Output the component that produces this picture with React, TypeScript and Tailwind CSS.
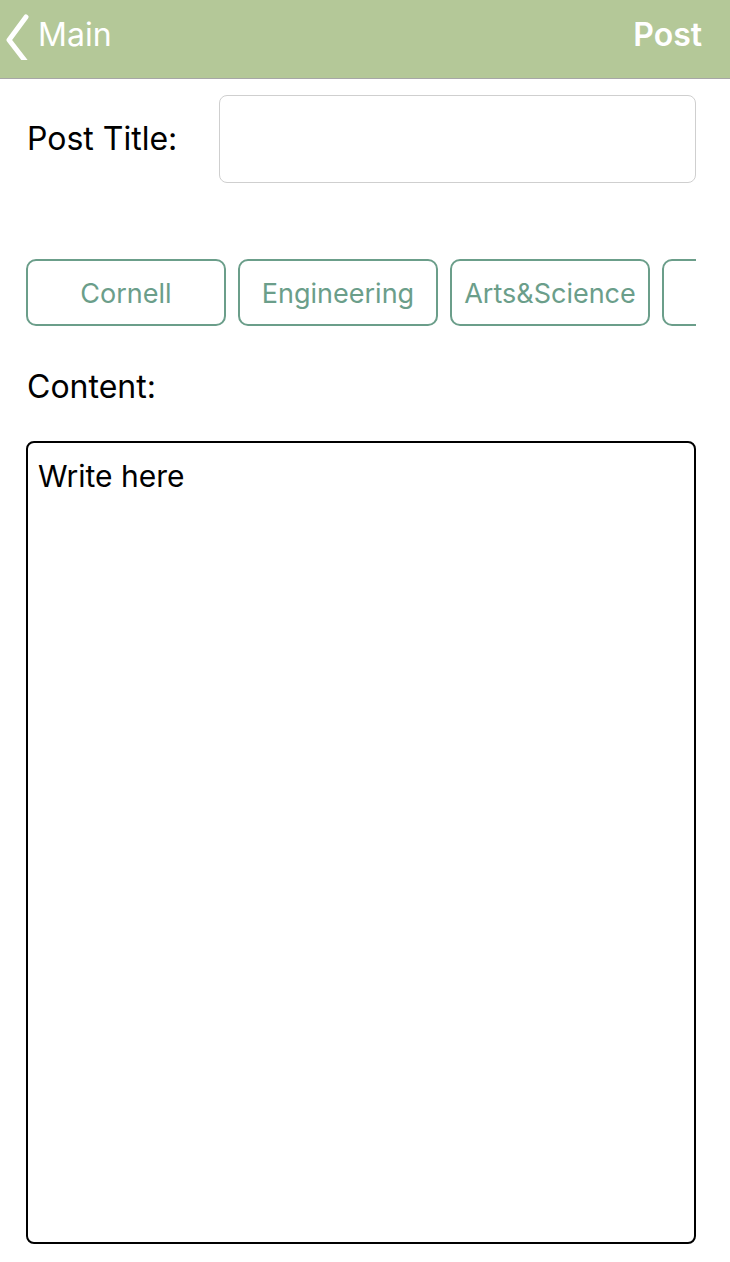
const TAGS = ["Cornell", "Engineering", "Arts&Science", ""];

function BackChevron() {
  return (
    <svg width="30" height="50" viewBox="0 0 30 50" fill="none" className="shrink-0">
      <path
        d="M24 7 L7 30 L24 52"
        stroke="white"
        strokeWidth="5"
        strokeLinecap="round"
        strokeLinejoin="round"
      />
    </svg>
  );
}

export default function App() {
  return (
    <div className="min-h-[1262px] w-[730px] bg-white font-['Inter','Noto_Sans',sans-serif] text-black">
      <header className="flex h-[79px] items-center justify-between border-b border-[#a7a7a7] bg-[#b4c898] pb-[8px] pl-[2px] pr-[28px] text-white">
        <div className="flex items-center gap-[6px]">
          <BackChevron />
          <span className="text-[32px] leading-none">Main</span>
        </div>
        <span className="text-[32px] font-semibold leading-none">Post</span>
      </header>

      <div className="flex items-center pl-[27px] pr-[34px] pt-[16px]">
        <span className="w-[192px] shrink-0 text-[32px]">Post Title:</span>
        <div className="h-[88px] flex-1 rounded-[8px] border border-[#cfcfcf]" />
      </div>

      <div className="mr-[34px] mt-[76px] flex gap-[12px] overflow-hidden pl-[26px]">
        {TAGS.map((tag, i) => (
          <div
            key={i}
            className="flex h-[67px] w-[200px] shrink-0 items-center justify-center rounded-[10px] border-2 border-[#6b9e8a] pt-[3px] text-[27px] text-[#6b9e8a]"
          >
            {tag}
          </div>
        ))}
      </div>

      <div className="mt-[43px] pl-[27px] text-[32px] leading-[36px]">Content:</div>

      <div className="ml-[26px] mr-[34px] mt-[36px] h-[803px] rounded-[8px] border-2 border-black px-[10px] pt-[15px] text-[30px] leading-[36px]">
        Write here
      </div>
    </div>
  );
}
